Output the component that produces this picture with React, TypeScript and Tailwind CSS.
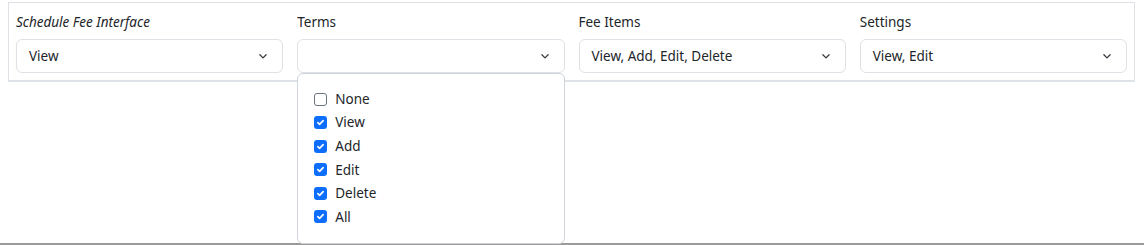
import React from "react";

const columns = [
  { label: "Schedule Fee Interface", value: "View", italic: true, open: false },
  { label: "Terms", value: "", italic: false, open: true },
  { label: "Fee Items", value: "View, Add, Edit, Delete", italic: false, open: false },
  { label: "Settings", value: "View, Edit", italic: false, open: false },
];

const options = [
  { name: "None", checked: false },
  { name: "View", checked: true },
  { name: "Add", checked: true },
  { name: "Edit", checked: true },
  { name: "Delete", checked: true },
  { name: "All", checked: true },
];

const Chevron = () => (
  <svg width="10" height="10" viewBox="0 0 16 16" fill="none" stroke="#343a40" strokeWidth="2" strokeLinecap="round" strokeLinejoin="round">
    <path d="M3 6l5 5 5-5" />
  </svg>
);

const Checkbox = ({ checked }: { checked: boolean }) =>
  checked ? (
    <span className="flex h-[13px] w-[13px] items-center justify-center rounded-[3px] bg-[#0d6efd]">
      <svg width="9" height="9" viewBox="0 0 12 12" fill="none" stroke="white" strokeWidth="2.2" strokeLinecap="round" strokeLinejoin="round">
        <path d="M2.5 6.2l2.3 2.3 4.7-5" />
      </svg>
    </span>
  ) : (
    <span className="h-[13px] w-[13px] rounded-[3px] border border-[#6c757d] bg-white" />
  );

const App = () => {
  return (
    <div className="relative flex h-[245px] w-[1144px] flex-col bg-white font-['Noto_Sans',sans-serif] text-[13.5px] text-[#212529]">
      <div className="flex-1 pl-2 pr-[9px] pt-[2px]">
        <div className="grid grid-cols-4 border-x border-t border-b-2 border-[#dee2e6]">
          {columns.map((col) => (
            <div key={col.label} className="relative px-[7px] pb-[7px] pt-[10px]">
              <div className={`h-[18px] leading-[18px] ${col.italic ? "italic" : ""}`}>{col.label}</div>
              <div className="mt-[8px] flex h-[34px] items-center justify-between rounded-md border border-[#dee2e6] bg-white pl-3 pr-[14px]">
                <span>{col.value}</span>
                <Chevron />
              </div>
              {col.open && (
                <div className="absolute left-[7px] right-[7px] top-[70px] z-10 flex h-[171px] flex-col justify-center gap-[6.6px] rounded-md border border-[#ced4da] bg-white pb-[1px] pl-4">
                  {options.map((opt) => (
                    <label key={opt.name} className="flex h-[17px] items-center gap-2">
                      <Checkbox checked={opt.checked} />
                      <span>{opt.name}</span>
                    </label>
                  ))}
                </div>
              )}
            </div>
          ))}
        </div>
      </div>
      <div className="h-[2px] w-full bg-[#9a9a9a]" />
    </div>
  );
};

export default App;
